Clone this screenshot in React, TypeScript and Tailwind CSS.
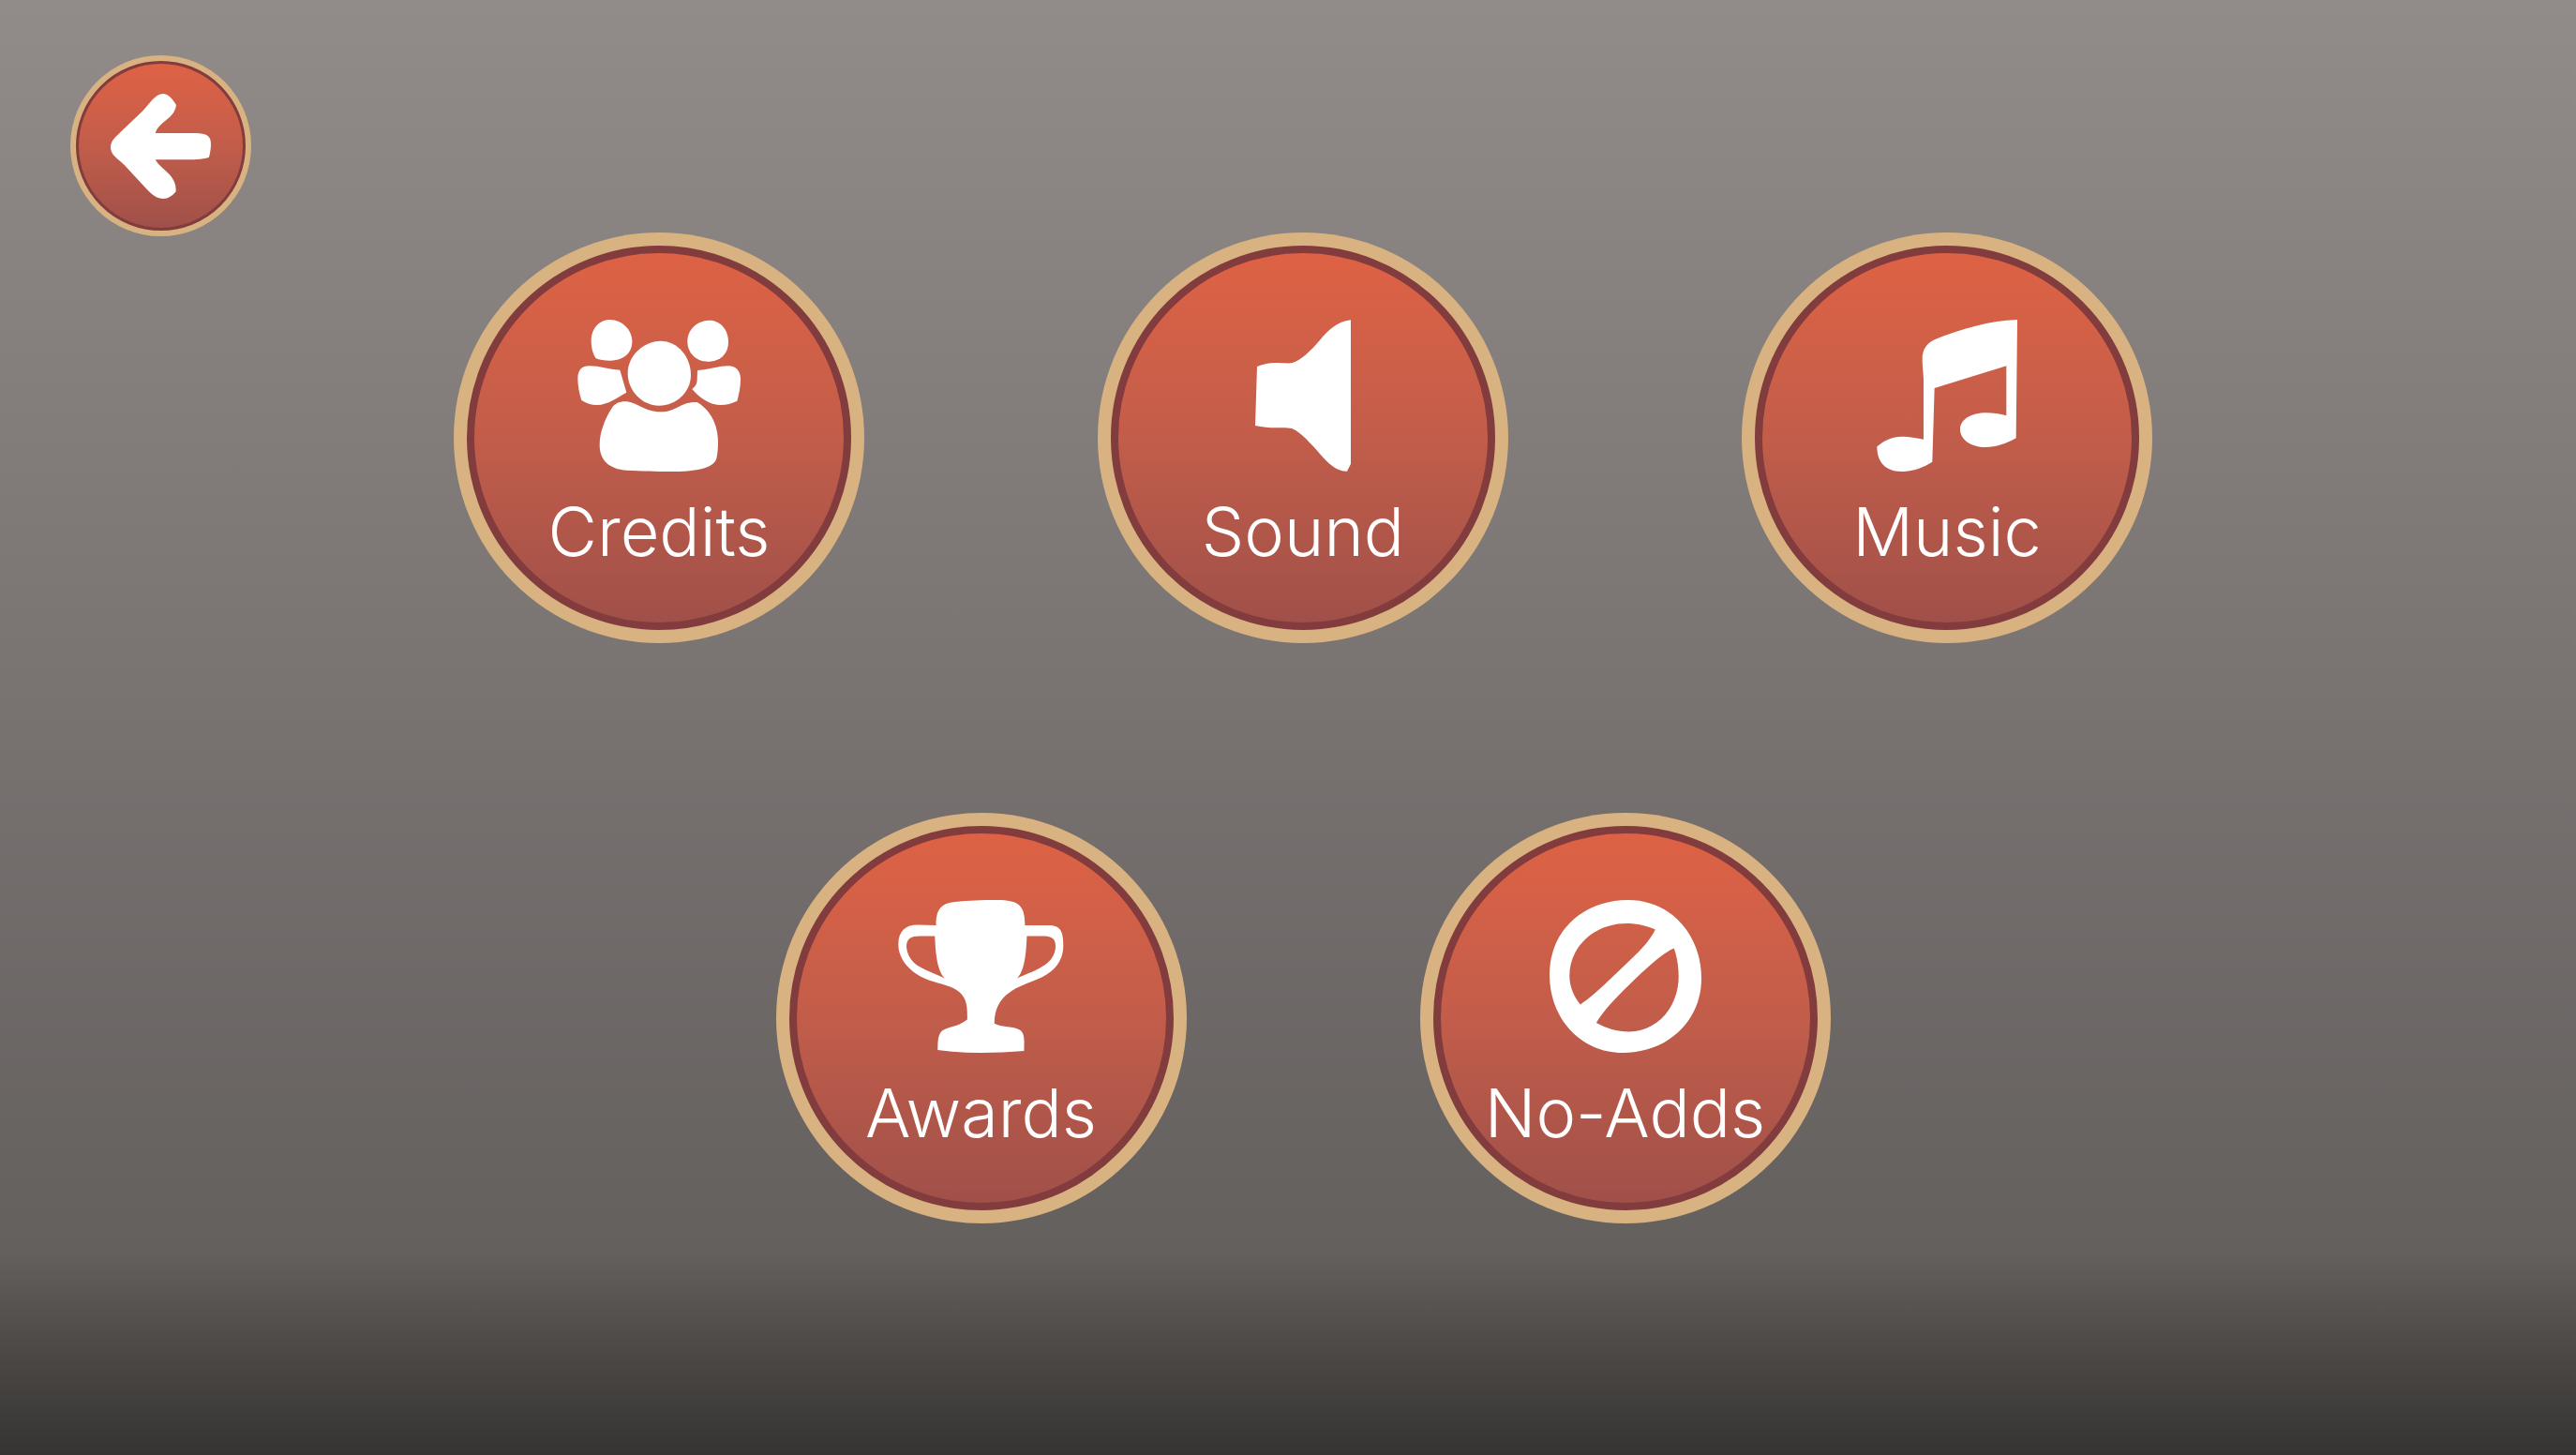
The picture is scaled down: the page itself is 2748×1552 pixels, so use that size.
import type { ReactNode } from "react";

function Icon({ viewBox, className, children }: { viewBox: string; className: string; children: ReactNode }) {
  return (
    <svg viewBox={viewBox} className={className} fill="currentColor" aria-hidden="true">
      {children}
    </svg>
  );
}

function PeopleIcon() {
  return (
    <Icon viewBox="77 63 522 486" className="h-[162px] w-[174px]">
      <path d="M181 63C221 64 252 96 252 133C252 172 222 194 182 194C162 194 147 191 136 187C127 175 121 153 121 130C121 92 146 63 181 63Z" />
      <path d="M498 65C535 65 560 94 560 134C560 172 534 197 494 197C455 197 429 168 429 132C429 95 459 66 498 65Z" />
      <path d="M343 131C398 131 440 182 440 240C440 294 394 338 338 338C283 338 238 290 238 234C238 179 287 132 343 131Z" />
      <path d="M213 224L234 296C205 312 175 335 140 336C121 336 104 330 90 321C83 300 78 275 78 251C78 224 91 211 115 211C148 211 178 222 213 224Z" />
      <path d="M461 225C496 223 529 211 559 211C586 211 599 228 599 253C599 278 594 302 588 323C571 331 554 336 535 336C496 335 468 312 444 285C455 276 460 268 460 255Z" />
      <path d="M188 344C198 331 211 325 229 325C267 325 289 358 343 358C395 358 405 325 460 327C508 355 527 405 527 457C527 477 525 494 522 508C511 538 457 549 373 549C332 549 282 547 235 545C178 541 148 512 148 464C148 420 167 377 188 344Z" />
    </Icon>
  );
}

function SpeakerIcon() {
  return (
    <Icon viewBox="86 63 306 486" className="h-[162px] w-[102px]">
      <path d="M92 213C112 205 130 201 151 201C170 201 188 203 202 202C232 195 266 160 292 130C320 96 348 69 392 64V524L380 548C346 550 318 520 292 491C266 462 231 422 205 412C192 408 172 409 152 409C131 409 108 406 86 402Z" />
    </Icon>
  );
}

function NotesIcon() {
  return (
    <Icon viewBox="65 63 450 486" className="h-[162px] w-[150px]">
      <path d="M515 63L511 442C479 460 447 471 413 471C367 471 332 447 332 414C332 382 368 361 416 361C437 361 459 365 480 370V211L250 282L243 518C212 537 179 549 144 549C93 549 66 519 66 469C88 450 114 437 145 437C169 437 192 442 215 446V253C214 231 211 213 211 190C211 159 224 139 250 127C335 92 428 66 515 63Z" />
    </Icon>
  );
}

function TrophyIcon() {
  return (
    <Icon viewBox="84 60 530 490" className="h-[163px] w-[177px]">
      <path
        fillRule="evenodd"
        d="M205 141C205 90 219 70 275 65C305 62 350 60 400 60C469 60 490 76 490 141H567C602 141 613 158 613 206C613 259 580 294 530 314C472 338 392 358 392 456C421 470 450 463 474 477C489 487 488 507 487 544C440 548 395 550 348 550C302 550 255 547 210 541C211 510 210 492 226 478C246 465 275 467 305 443C305 420 306 394 294 373C268 328 206 333 153 304C113 281 84 245 84 203C84 161 106 140 145 140ZM201 176H154C122 176 110 185 110 211C112 237 128 259 150 273C178 289 206 299 233 311C210 290 203 237 201 176ZM496 176C494 237 487 289 465 311C493 298 528 287 556 267C577 252 588 230 588 208C588 183 575 176 546 176Z"
      />
    </Icon>
  );
}

function ForbiddenIcon() {
  return (
    <Icon viewBox="66 60 487 490" className="h-[163px] w-[162px]">
      <path
        fillRule="evenodd"
        d="M318 60C454 60 553 169 553 312C553 449 444 550 301 550C165 550 66 439 66 299C66 161 172 60 318 60ZM165 395C210 366 278 297 310 267C350 228 387 194 405 155C377 142 348 135 312 135C210 135 130 210 130 302C130 338 144 370 165 395ZM465 215C424 231 363 292 316 337C276 376 240 413 216 454C248 472 282 482 321 482C413 482 480 402 480 305C480 274 475 242 465 215Z"
      />
    </Icon>
  );
}

function BackIcon() {
  return (
    <Icon viewBox="174 177 321 336" className="h-[112px] w-[107px]">
      <path d="M343 177C361 178 373 196 384 213C378 258 330 264 317 303H438C476 303 495 308 495 338C495 353 492 367 489 380C465 388 438 388 407 388H317C336 422 386 436 383 490C371 504 359 513 341 513C317 513 298 492 277 469L218 405C199 386 174 374 174 348C174 326 191 315 206 299L274 235C299 210 315 177 343 177Z" />
    </Icon>
  );
}

const rows = [
  [
    { label: "Credits", icon: <PeopleIcon /> },
    { label: "Sound", icon: <SpeakerIcon /> },
    { label: "Music", icon: <NotesIcon /> },
  ],
  [
    { label: "Awards", icon: <TrophyIcon /> },
    { label: "No-Adds", icon: <ForbiddenIcon /> },
  ],
];

function MenuButton({ label, icon }: { label: string; icon: ReactNode }) {
  return (
    <button type="button" className="size-[438px] shrink-0 cursor-pointer rounded-full bg-[#d8b280] p-[14px]">
      <span className="flex size-full flex-col items-center rounded-full border-8 border-[#823c3e] bg-linear-to-b from-[#de6244] via-[#c25d4a] to-[#a05049] pt-[71px]">
        {icon}
        <span className="mt-[22px] text-[72px] leading-[84px] font-light whitespace-nowrap">{label}</span>
      </span>
    </button>
  );
}

export default function App() {
  return (
    <main className="grid min-h-screen grid-cols-1 bg-linear-[to_bottom,#918b8a_0%,#7a7473_45%,#64605e_86%,#4c4846_93%,#353432_100%] font-['Inter','Lato',sans-serif] text-white">
      <nav className="z-10 col-start-1 row-start-1 self-start justify-self-start pt-[59px] pl-[75px]">
        <button type="button" aria-label="Back" className="block size-[193px] cursor-pointer rounded-full bg-[#d8b280] p-[6px]">
          <span className="flex size-full items-center justify-center rounded-full border-3 border-[#823c3e] bg-linear-to-b from-[#de6244] via-[#c25d4a] to-[#a05049]">
            <BackIcon />
          </span>
        </button>
      </nav>
      <section aria-label="Settings" className="col-start-1 row-start-1 flex flex-col gap-[181px] pt-[248px] pb-[246px] pl-8">
        {rows.map((row) => (
          <div key={row[0].label} className="flex flex-wrap justify-center gap-[249px]">
            {row.map((item) => (
              <MenuButton key={item.label} label={item.label} icon={item.icon} />
            ))}
          </div>
        ))}
      </section>
    </main>
  );
}
